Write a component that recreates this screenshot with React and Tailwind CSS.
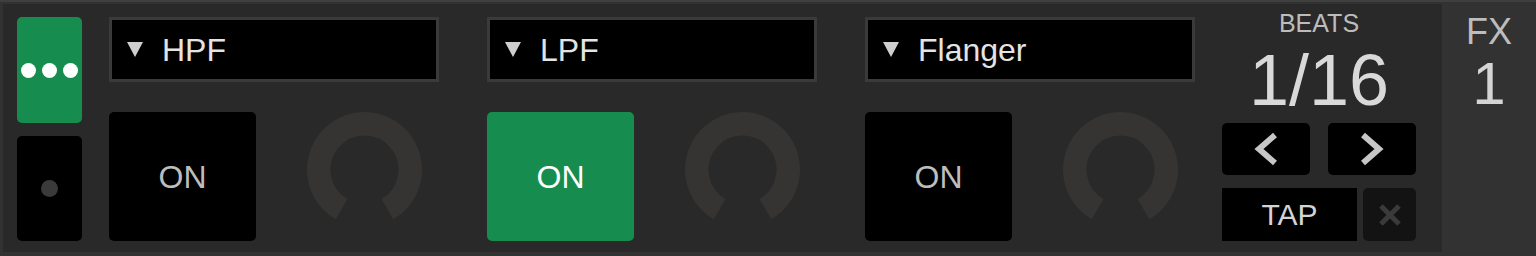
import React from "react";

const effects = [
  { name: "HPF", on: false },
  { name: "LPF", on: true },
  { name: "Flanger", on: false },
];

const Knob = () => (
  <svg width="115" height="115" viewBox="0 0 115 115">
    <path
      d="M 34.6 97.1 A 45.75 45.75 0 1 1 80.4 97.1"
      fill="none"
      stroke="#353433"
      strokeWidth="23.5"
    />
  </svg>
);

const EffectSlot = ({ name, on }) => (
  <div className="flex flex-col w-[330px]">
    {/* selector */}
    <div className="h-[65px] border-[3px] border-[#3a3a3a] bg-black flex items-center">
      <svg width="16" height="15" viewBox="0 0 16 15" className="ml-[15px]">
        <polygon points="0,0 16,0 8,15" fill="#cfcfcf" />
      </svg>
      <span className="ml-[19px] text-[32px] leading-none text-[#e4e4e4]">{name}</span>
    </div>

    <div className="flex mt-[30px]">
      <button
        className={`w-[147px] h-[129px] rounded-[5px] flex items-center justify-center text-[32px] leading-none ${
          on ? "bg-[#168d4f] text-white" : "bg-black text-[#bdbdbd]"
        }`}
      >
        ON
      </button>
      <div className="ml-[51px]">
        <Knob />
      </div>
    </div>
  </div>
);

export default function App() {
  return (
    <div className="w-[1536px] h-[256px] bg-[#323232] border-t-2 border-[#3f3f3f] flex font-['Liberation_Sans',Arial,sans-serif]">
      <div className="w-[1439px] ml-[3px] mt-[2px] mb-[4px] bg-[#292929] flex pt-[13px] pl-[14px]">
        {/* left mode buttons */}
        <div className="flex flex-col w-[65px]">
          <button className="h-[106px] rounded-[5px] bg-[#168d4f] flex items-center justify-center gap-[6px]">
            <span className="w-[15px] h-[15px] rounded-full bg-white" />
            <span className="w-[15px] h-[15px] rounded-full bg-white" />
            <span className="w-[15px] h-[15px] rounded-full bg-white" />
          </button>
          <button className="mt-[13px] h-[105px] rounded-[5px] bg-black flex items-center justify-center">
            <span className="w-[17px] h-[17px] rounded-full bg-[#3a3a3a]" />
          </button>
        </div>

        {/* effect slots */}
        <div className="flex ml-[27px] gap-[48px]">
          {effects.map((fx) => (
            <EffectSlot key={fx.name} {...fx} />
          ))}
        </div>

        {/* beats */}
        <div className="ml-[27px] w-[194px] flex flex-col items-center">
          <div className="mt-[-6px] text-[25px] leading-none text-[#bcbcbc]">BEATS</div>
          <div className="mt-[8px] text-[72px] leading-none text-[#d9d9d9]">1/16</div>
          <div className="mt-[7px] flex gap-[18px] w-full">
            <button className="w-[88px] h-[52px] rounded-[5px] bg-black flex items-center justify-center">
              <svg width="26" height="34" viewBox="0 0 26 34">
                <polyline points="22,3 6,17 22,31" fill="none" stroke="#c6c6c6" strokeWidth="6" />
              </svg>
            </button>
            <button className="w-[88px] h-[52px] rounded-[5px] bg-black flex items-center justify-center">
              <svg width="26" height="34" viewBox="0 0 26 34">
                <polyline points="4,3 20,17 4,31" fill="none" stroke="#c6c6c6" strokeWidth="6" />
              </svg>
            </button>
          </div>
          <div className="mt-[13px] flex gap-[6px] w-full">
            <button className="w-[135px] h-[53px] bg-black flex items-center justify-center text-[30px] leading-none text-[#d4d4d4]">
              TAP
            </button>
            <button className="w-[53px] h-[53px] rounded-[5px] bg-[#131313] flex items-center justify-center">
              <svg width="24" height="24" viewBox="0 0 24 24">
                <path d="M3 3 L21 21 M21 3 L3 21" stroke="#3a3a3a" strokeWidth="5" />
              </svg>
            </button>
          </div>
        </div>
      </div>

      {/* FX number */}
      <div className="flex-1 flex flex-col items-center pt-[12px]">
        <div className="text-[36px] leading-none text-[#bdbdbd]">FX</div>
        <div className="mt-[4px] text-[60px] leading-none text-[#d4d4d4]">1</div>
      </div>
    </div>
  );
}
